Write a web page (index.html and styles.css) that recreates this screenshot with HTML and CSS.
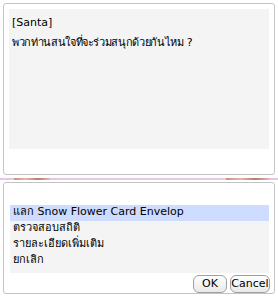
FILE: index.html
```html
<!DOCTYPE html>
<html>
<head>
<meta charset="utf-8">
<link rel="stylesheet" href="styles.css">
</head>
<body>
<div class="frame">
  <div class="panel top">
    <div class="msg">
      <div class="line">[Santa]</div>
      <div class="line ask">พวกท่านสนใจที่จะร่วมสนุกด้วยกันไหม ?</div>
    </div>
  </div>
  <div class="divider"><span class="tex left"></span><span class="tex right"></span></div>
  <div class="panel bottom">
    <ul class="menu">
      <li class="sel">แลก Snow Flower Card Envelop</li>
      <li>ตรวจสอบสถิติ</li>
      <li>รายละเอียดเพิ่มเติม</li>
      <li>ยกเลิก</li>
    </ul>
    <div class="buttons">
      <button class="btn ok">OK</button>
      <button class="btn cancel">Cancel</button>
    </div>
  </div>
</div>
</body>
</html>
```
FILE: styles.css
```css
html, body {
  margin: 0;
  padding: 0;
  background: #ffffff;
}
body {
  width: 278px;
  height: 298px;
  font-family: Tahoma, "DejaVu Sans", "Noto Sans", sans-serif;
  font-size: 11px;
  color: #000;
}
.frame {
  padding: 3px 3px 0 3px;
  display: flex;
  flex-direction: column;
}
.panel {
  border: 1px solid #c4c4c4;
  border-radius: 3px;
  background: #fff;
  box-sizing: border-box;
}
.top {
  height: 172px;
  padding: 5px 5px 0 5px;
}
.msg {
  background: #f4f4f4;
  height: 140px;
  padding: 7px 3px;
  box-sizing: border-box;
}
.line {
  height: 20px;
  line-height: 14px;
  white-space: nowrap;
}
.line.ask {
  letter-spacing: -0.35px;
}
.divider {
  position: relative;
  height: 2px;
  margin: 3px -3px 2px -3px;
  background: #e6c6e6;
}
.tex {
  position: absolute;
  top: 0;
  height: 2px;
  background: linear-gradient(90deg, #c9907f, #e8b4a8, #b97a6e, #e7b9b0);
}
.tex.left { left: 14px; width: 36px; }
.tex.right { left: 226px; width: 44px; }
.bottom {
  height: 112px;
  padding: 0 5px 0 6px;
  display: flex;
  flex-direction: column;
}
.menu {
  list-style: none;
  margin: 22px 0 0 0;
  padding: 0;
  background: #f4f4f4;
  height: 68px;
}
.menu li {
  height: 16px;
  line-height: 14px;
  padding: 0 3px;
  white-space: nowrap;
}
.menu li.sel {
  background: #cddcff;
}
.buttons {
  display: flex;
  justify-content: flex-end;
  gap: 3px;
  margin-top: 2px;
  margin-right: -1px;
}
.btn {
  font-family: Tahoma, "DejaVu Sans", sans-serif;
  font-size: 11px;
  height: 18px;
  padding: 0;
  border: 1px solid #a0a0a0;
  border-radius: 6px;
  background: linear-gradient(#ffffff, #e9e9e9);
  color: #000;
  line-height: 14px;
}
.btn.ok { width: 34px; }
.btn.cancel { width: 40px; }
```
